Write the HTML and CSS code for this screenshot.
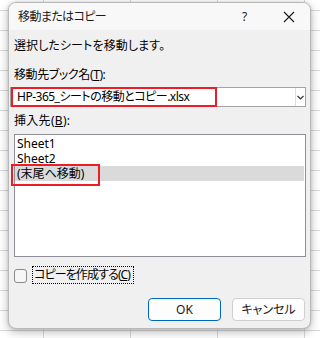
FILE: index.html
```html
<!DOCTYPE html>
<html lang="ja">
<head>
<meta charset="utf-8">
<link rel="stylesheet" href="styles.css">
</head>
<body>
<div class="sheet">
  <div class="dialog">
    <div class="titlebar">
      <span class="title">移動またはコピー</span>
      <span class="help">?</span>
      <span class="close"><svg width="12" height="12" viewBox="0 0 12 12"><path d="M1 1L11 11M11 1L1 11" stroke="#1a1a1a" stroke-width="1.1" fill="none"/></svg></span>
    </div>
    <div class="content">
      <p class="msg">選択したシートを移動します。</p>
      <p class="lbl lbl-book">移動先ブック名(<u>T</u>):</p>
      <div class="combo">
        <span class="combo-text">HP-365_シートの移動とコピー.xlsx</span>
        <span class="combo-btn"><svg width="7" height="5" viewBox="0 0 7 5"><path d="M0.5 1L3.5 4L6.5 1" stroke="#333" stroke-width="1.2" fill="none"/></svg></span>
      </div>
      <p class="lbl lbl-ins">挿入先(<u>B</u>):</p>
      <div class="list">
        <div class="item">Sheet1</div>
        <div class="item">Sheet2</div>
        <div class="item sel"><span class="mark"></span>(末尾へ移動)</div>
      </div>
      <div class="check-row">
        <span class="box"></span>
        <span class="focus">コピーを作成する(<u>C</u>)</span>
      </div>
      <div class="buttons">
        <button class="btn primary">OK</button>
        <button class="btn">キャンセル</button>
      </div>
    </div>
  </div>
</div>
</body>
</html>
```
FILE: styles.css
```css
* { box-sizing: border-box; }
html, body { margin: 0; padding: 0; }
body {
  font-family: "Noto Sans", "Noto Sans CJK JP", sans-serif;
  font-size: 12px;
  color: #000;
  font-feature-settings: "palt";
}
.sheet {
  position: relative;
  width: 320px;
  height: 338px;
  overflow: hidden;
  background-color: #ffffff;
  background-image:
    linear-gradient(to bottom, transparent 19px, #d8d8d8 19px, #d8d8d8 20px),
    linear-gradient(to right, transparent 86px, #d8d8d8 86px, #d8d8d8 87px);
  background-size: 100% 20px, 87px 100%;
  background-position: 0 11px, -43px 0;
}
.dialog {
  position: absolute;
  left: 8px;
  top: 2px;
  width: 303px;
  height: 327px;
  border: 1px solid #b9b9b9;
  border-radius: 8px;
  background: #f0f0f0;
  box-shadow: 0 3px 10px rgba(0,0,0,0.28), 0 0 3px rgba(0,0,0,0.12);
  overflow: hidden;
  display: flex;
  flex-direction: column;
}
.titlebar {
  height: 27px;
  flex: none;
  background: #f8f8f8;
  display: flex;
  align-items: center;
  padding-left: 9px;
  padding-right: 15px;
  color: #1a1a1a;
}
.title { font-size: 12px; line-height: 16px; letter-spacing: -0.6px; }
.help { margin-left: auto; font-size: 12px; line-height: 16px; width: 6px; }
.close { margin-left: 35px; display: flex; }
.content {
  flex: 1;
  display: flex;
  flex-direction: column;
  padding: 0 4px 0 5px;
}
.msg, .lbl { margin: 0; line-height: 16px; }
.msg { margin-top: 8px; letter-spacing: 0.1px; }
.lbl-book { margin-top: 13px; letter-spacing: -0.4px; }
.lbl-ins { margin-top: 6px; letter-spacing: 0.3px; }
u { text-decoration: underline; text-underline-offset: 1px; }
.combo {
  margin-top: 4px;
  margin-left: -4px;
  height: 20px;
  border: 1px solid #a3a3a3;
  background: #fff;
  display: flex;
  align-items: stretch;
}
.combo-text {
  width: 206px;
  margin: -1px 0;
  border: 2px solid #ee1c25;
  padding-left: 4px;
  font-size: 12px;
  letter-spacing: -0.5px;
  line-height: 16px;
  white-space: nowrap;
}
.combo-btn {
  margin-left: auto;
  width: 10px;
  border-left: 1px solid #dedede;
  display: flex;
  align-items: center;
  justify-content: center;
}
.list {
  margin-top: 5px;
  height: 123px;
  border: 1px solid #8e8e94;
  background: #fff;
  padding-top: 1px;
}
.item {
  position: relative;
  height: 15px;
  line-height: 15px;
  padding-left: 2px;
  font-size: 12px;
}
.item.sel {
  background: #dadada;
  margin-right: 1px;
}
.mark {
  position: absolute;
  left: -4px;
  top: -2px;
  width: 89px;
  height: 22px;
  border: 2px solid #ee1c25;
}
.check-row {
  margin-top: 9px;
  height: 18px;
  display: flex;
  align-items: center;
}
.box {
  width: 13px;
  height: 14px;
  border: 1px solid #8a8a8a;
  border-radius: 3px;
  background: #f6f6f6;
  margin-top: 2px;
}
.focus {
  margin-left: 5px;
  height: 18px;
  border: 1px dotted #000;
  padding: 0 3px 0 1px;
  line-height: 16px;
  font-size: 12px;
  letter-spacing: -0.9px;
  white-space: nowrap;
}
.buttons {
  margin-top: 14px;
  display: flex;
  justify-content: flex-end;
  gap: 11px;
  margin-right: 1px;
}
.btn {
  width: 73px;
  height: 23px;
  border: 1px solid #d0d0d0;
  border-radius: 4px;
  background: #fdfdfd;
  font-family: "Noto Sans", "Noto Sans CJK JP", sans-serif;
  font-feature-settings: "palt";
  font-size: 12px;
  color: #1a1a1a;
  padding: 0;
  line-height: 20px;
}
.btn.primary {
  border-color: #0067c0;
}
```
